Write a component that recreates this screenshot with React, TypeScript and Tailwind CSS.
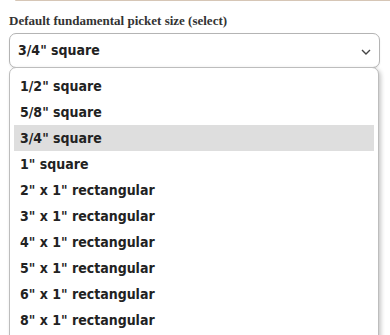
import { useState } from "react";

const sizes = [
  '1/2" square',
  '5/8" square',
  '3/4" square',
  '1" square',
  '2" x 1" rectangular',
  '3" x 1" rectangular',
  '4" x 1" rectangular',
  '5" x 1" rectangular',
  '6" x 1" rectangular',
  '8" x 1" rectangular',
];

export default function App() {
  const [picked] = useState('3/4" square');

  return (
    <div className="relative h-[335px] w-[390px] overflow-hidden bg-white">
      {/* bottom edge of the card above */}
      <div className="ml-[15px] h-[1px] w-[375px] rounded-bl-md bg-[#d6c6b6]" />

      <div className="px-[9px] pt-[12px]">
        <label className="block text-[13px] font-bold leading-[16px] text-[#333] [font-family:'Liberation_Serif',serif]">
          Default fundamental picket size (select)
        </label>

        <div className="relative mt-[4px]">
          <div className="flex h-[35px] w-[371px] items-center justify-between rounded-[7px] border border-[#b4b4b4] bg-white pl-[8px] pr-[8px] shadow-[0_1px_2px_rgba(0,0,0,0.08)]">
            <span className="text-[14px] font-bold text-[#222] [font-family:'DejaVu_Sans_Condensed','DejaVu_Sans',sans-serif]">
              {picked}
            </span>
            <svg width="10" height="6" viewBox="0 0 10 6" className="mt-[3px]">
              <path d="M1 1 L5 5 L9 1" fill="none" stroke="#444" strokeWidth="1.4" />
            </svg>
          </div>

          {/* stuff under the open list */}
          <div className="mt-[12px] h-[62px] w-[370px] rounded-md border-r-2 border-[#d9cb8c] bg-[#fffbe8]" />
          <div className="mt-[38px] h-[90px] w-[370px] rounded-md border-r border-[#ece6c6]" />

          {/* open option list */}
          <div className="absolute left-0 top-[34px] h-[320px] w-[370px] rounded-t-[7px] border border-[#bdbdbd] bg-white px-[4px] pt-[5px] shadow-[2px_2px_4px_rgba(0,0,0,0.22)]">
            {sizes.map((s) => (
              <div
                key={s}
                className={`flex h-[26px] items-center px-[6px] text-[14px] font-bold text-[#222] [font-family:'DejaVu_Sans_Condensed','DejaVu_Sans',sans-serif] ${
                  s === picked ? "bg-[#dedede]" : ""
                }`}
              >
                {s}
              </div>
            ))}
          </div>
        </div>
      </div>
    </div>
  );
}
